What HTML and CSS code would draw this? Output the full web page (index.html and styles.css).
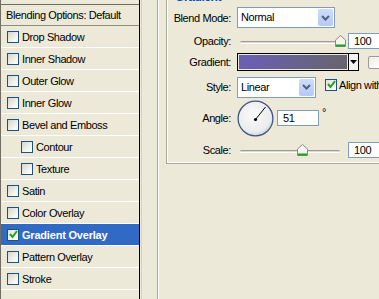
FILE: index.html
```html
<!DOCTYPE html>
<html lang="en">

<head>
    <meta charset="UTF-8">
    <title>Layer Style - Gradient Overlay</title>
    <link rel="stylesheet" href="styles.css">
</head>

<body>
    <div class="dialog">
        <!-- Styles list -->
        <div class="styles-list">
            <div class="list-header">Blending Options: Default</div>
            <div class="list-row"><span class="cb"></span>Drop Shadow</div>
            <div class="list-row"><span class="cb"></span>Inner Shadow</div>
            <div class="list-row"><span class="cb"></span>Outer Glow</div>
            <div class="list-row"><span class="cb"></span>Inner Glow</div>
            <div class="list-row"><span class="cb"></span>Bevel and Emboss</div>
            <div class="list-row sub"><span class="cb"></span>Contour</div>
            <div class="list-row sub"><span class="cb"></span>Texture</div>
            <div class="list-row"><span class="cb"></span>Satin</div>
            <div class="list-row"><span class="cb"></span>Color Overlay</div>
            <div class="list-row active">
                <span class="cb checked">
                    <svg width="9" height="9" viewBox="0 0 9 9"><polyline points="1,4 3.5,7 8,1" fill="none" stroke="#21a121" stroke-width="2"/></svg>
                </span>Gradient Overlay
            </div>
            <div class="list-row"><span class="cb"></span>Pattern Overlay</div>
            <div class="list-row"><span class="cb"></span>Stroke</div>
        </div>

        <div class="gutter"></div>

        <!-- Settings panel -->
        <div class="panel">
            <div class="group">
                <div class="legend"><span>Gradient</span></div>
                <div class="fields">
                    <label>Blend Mode:</label>
                    <div class="ctl">
                        <div class="select blend">
                            <span class="select-text">Normal</span>
                            <span class="drop">
                                <svg width="9" height="6" viewBox="0 0 9 6"><polyline points="1,1 4.5,4.5 8,1" fill="none" stroke="#4d6185" stroke-width="2"/></svg>
                            </span>
                        </div>
                    </div>

                    <label>Opacity:</label>
                    <div class="ctl">
                        <div class="slider">
                            <div class="track"></div>
                            <svg class="thumb" style="left: 100%;" width="11" height="12" viewBox="0 0 11 12">
                                <polygon points="5.5,0.5 10.5,5 10.5,11.5 0.5,11.5 0.5,5" fill="#f4f4ee" stroke="#8c8c84"/>
                                <line x1="1" y1="10.5" x2="10" y2="10.5" stroke="#21a121" stroke-width="2"/>
                            </svg>
                        </div>
                        <input class="num wide" type="text" value="100">
                    </div>

                    <label>Gradient:</label>
                    <div class="ctl">
                        <div class="swatch">
                            <span class="ramp"></span>
                            <span class="swatch-drop">
                                <svg width="7" height="4" viewBox="0 0 7 4"><polygon points="0,0 7,0 3.5,4" fill="#000"/></svg>
                            </span>
                        </div>
                        <span class="cb plain reverse"></span>
                        <span class="cb-label">Reverse</span>
                    </div>

                    <label>Style:</label>
                    <div class="ctl">
                        <div class="select style">
                            <span class="select-text">Linear</span>
                            <span class="drop">
                                <svg width="9" height="6" viewBox="0 0 9 6"><polyline points="1,1 4.5,4.5 8,1" fill="none" stroke="#4d6185" stroke-width="2"/></svg>
                            </span>
                        </div>
                        <span class="cb checked align">
                            <svg width="9" height="9" viewBox="0 0 9 9"><polyline points="1,4 3.5,7 8,1" fill="none" stroke="#21a121" stroke-width="2"/></svg>
                        </span>
                        <span class="cb-label">Align with Layer</span>
                    </div>

                    <label>Angle:</label>
                    <div class="ctl">
                        <svg class="dial" width="37" height="37" viewBox="0 0 37 37">
                            <defs>
                                <radialGradient id="dialFill" cx="45%" cy="40%" r="65%">
                                    <stop offset="0" stop-color="#fbfbfb"/>
                                    <stop offset="0.75" stop-color="#ececec"/>
                                    <stop offset="1" stop-color="#c9c9c9"/>
                                </radialGradient>
                            </defs>
                            <circle cx="18.5" cy="18.5" r="17.4" fill="url(#dialFill)" stroke="#3e5588" stroke-width="1.3"/>
                            <line x1="18.5" y1="19.5" x2="28.5" y2="7" stroke="#000" stroke-width="1"/>
                            <circle cx="18.5" cy="19.5" r="1.6" fill="#000"/>
                        </svg>
                        <input class="num angle" type="text" value="51">
                        <span class="deg">°</span>
                    </div>

                    <label>Scale:</label>
                    <div class="ctl">
                        <div class="slider">
                            <div class="track"></div>
                            <svg class="thumb" style="left: 62%;" width="11" height="12" viewBox="0 0 11 12">
                                <polygon points="5.5,0.5 10.5,5 10.5,11.5 0.5,11.5 0.5,5" fill="#f4f4ee" stroke="#8c8c84"/>
                                <line x1="1" y1="10.5" x2="10" y2="10.5" stroke="#21a121" stroke-width="2"/>
                            </svg>
                        </div>
                        <input class="num wide" type="text" value="100">
                    </div>
                </div>
            </div>
        </div>
    </div>
</body>

</html>
```

FILE: styles.css
```css
/* Page */
body {
    margin: 0;
    width: 379px;
    height: 299px;
    overflow: hidden;
    background: #ece9d8;
    font-family: 'Liberation Sans', Arial, sans-serif;
    font-size: 11px;
    letter-spacing: -0.4px;
    color: #000;
}

.dialog {
    display: flex;
    height: 299px;
    white-space: nowrap;
}

/* Styles list */
.styles-list {
    width: 140px;
    flex: none;
    box-sizing: border-box;
    border-left: 1px solid #716f64;
    border-right: 1px solid #000;
    padding-top: 4px;
}

.list-header {
    height: 20px;
    line-height: 20px;
    padding-left: 5px;
    border-top: 1px solid #716f64;
    border-bottom: 1px solid #8e8c80;
}

.list-row {
    height: 21px;
    border-bottom: 1px solid #fff;
    display: flex;
    align-items: center;
    gap: 3px;
    padding-left: 6px;
}

.list-row.sub {
    padding-left: 20px;
}

.list-row.active {
    background: #316ac5;
    color: #fff;
    font-weight: bold;
    letter-spacing: -0.2px;
}

/* Checkboxes */
.cb {
    width: 12px;
    height: 12px;
    flex: none;
    box-sizing: border-box;
    border: 1px solid #1c5180;
    background: linear-gradient(135deg, #d6d5cc, #f6f6f3 70%, #fff);
    display: flex;
    align-items: center;
    justify-content: center;
}

.cb.checked {
    background: linear-gradient(135deg, #e2e2dc, #fff);
}

.cb.plain {
    border-color: #9c9b94;
    border-radius: 2px;
    background: linear-gradient(135deg, #ecebe6, #fff);
}

.cb-label {
    margin-left: 2px;
}

/* Gutter between list and panel */
.gutter {
    width: 17px;
    flex: none;
    background: linear-gradient(to right, #ece9d8 1px, #d4d1c4 1px, #d4d1c4 2px, #ece9d8 2px);
}

/* Panel and group box */
.panel {
    flex: 1;
    min-width: 0;
    overflow: hidden;
    border-left: 1px solid #aca899;
    box-shadow: inset 1px 0 #fff;
    padding-left: 8px;
}

.group {
    border-left: 1px solid #aca899;
    border-bottom: 1px solid #aca899;
    box-shadow: inset 1px 0 #fff, inset 0 -1px #fff;
    width: 260px;
}

.legend {
    height: 4px;
    overflow: hidden;
    padding-left: 8px;
}

.legend span {
    display: block;
    margin-top: -9px;
    line-height: 13px;
    color: #0046d5;
    font-weight: bold;
    font-size: 12px;
}

.fields {
    display: grid;
    grid-template-columns: 64px 1fr;
    grid-template-rows: 27px 19px 24px 26px 36px 27px;
    column-gap: 6px;
    align-items: center;
}

.fields label {
    text-align: right;
}

.ctl {
    display: flex;
    align-items: center;
}

/* Drop-down selects */
.select {
    height: 21px;
    box-sizing: border-box;
    border: 1px solid #7f9db9;
    background: #fff;
    display: flex;
    align-items: stretch;
}

.select.blend {
    width: 98px;
}

.select.style {
    width: 79px;
}

.select-text {
    flex: 1;
    line-height: 19px;
    padding-left: 3px;
}

.drop {
    width: 15px;
    margin: 1px;
    border-radius: 2px;
    background: linear-gradient(#cfdcfb, #b5c8f5);
    display: flex;
    align-items: center;
    justify-content: center;
}

.cb.align {
    margin-left: 9px;
    margin-top: -5px;
}

.cb.align + .cb-label {
    margin-top: -5px;
}

/* Sliders */
.slider {
    position: relative;
    width: 100px;
    height: 12px;
    margin-left: 3px;
}

.track {
    height: 1px;
    margin-top: 6px;
    border-radius: 2px;
    background: #dcdad0;
    border-top: 1px solid #9d9b92;
    border-bottom: 1px solid #fff;
}

.thumb {
    position: absolute;
    top: 0;
    margin-left: -5px;
}

/* Number fields */
.num {
    height: 16px;
    box-sizing: border-box;
    border: 1px solid #7f9db9;
    background: #fff;
    padding: 0 0 0 5px;
    font-family: inherit;
    font-size: 11px;
    letter-spacing: inherit;
    color: #000;
    outline: none;
}

.num.wide {
    width: 40px;
    margin-left: 8px;
}

.num.angle {
    width: 42px;
    margin-left: 3px;
}

.deg {
    align-self: flex-start;
    margin-top: 6px;
    margin-left: 3px;
}

/* Gradient swatch */
.swatch {
    width: 122px;
    height: 18px;
    box-sizing: border-box;
    border: 1px solid #000;
    display: flex;
}

.ramp {
    flex: 1;
    margin: 1px;
    background: linear-gradient(to right, #6a5fb7, #66656d);
}

.swatch-drop {
    width: 9px;
    border-left: 1px solid #000;
    background: #f4f3ee;
    display: flex;
    align-items: center;
    justify-content: center;
}

.cb.reverse {
    margin-left: 9px;
    width: 13px;
    height: 13px;
}
```
